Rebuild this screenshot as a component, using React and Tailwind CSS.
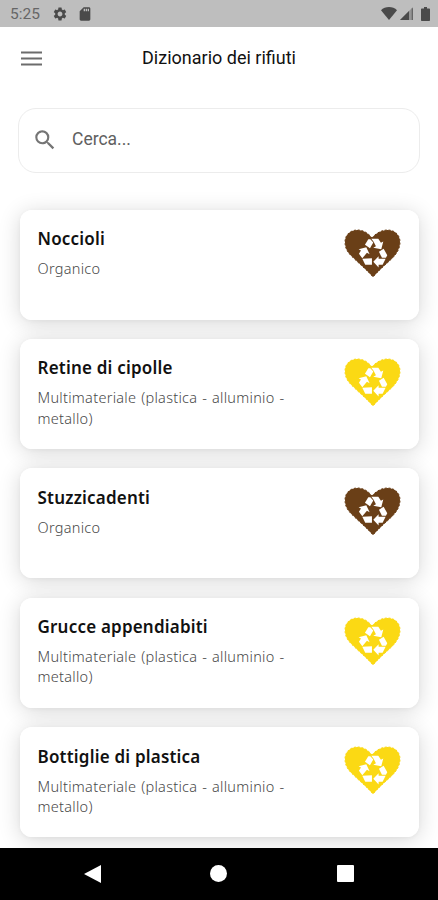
import { MdSdCard, MdSearch, MdSettings } from "react-icons/md";

const items = [
    { name: 'Noccioli', category: 'Organico', color: 'text-[#6a3f17]' },
    { name: 'Retine di cipolle', category: 'Multimateriale (plastica - alluminio - metallo)', color: 'text-[#fbd914]' },
    { name: 'Stuzzicadenti', category: 'Organico', color: 'text-[#6a3f17]' },
    { name: 'Grucce appendiabiti', category: 'Multimateriale (plastica - alluminio - metallo)', color: 'text-[#fbd914]' },
    { name: 'Bottiglie di plastica', category: 'Multimateriale (plastica - alluminio - metallo)', color: 'text-[#fbd914]' },
];

function StatusBar() {
    return (
        <div className="h-[26.5px] shrink-0 bg-[#bebebe] flex items-center pl-[10px] pr-[8.5px] text-[#4a4a4a]">
            <span className="font-[Roboto] text-[15.5px] leading-none text-[#666] mt-[2px]">5:25</span>
            <MdSettings className="size-[16px] ml-[12px] mt-[1px]" />
            <MdSdCard className="size-[16px] ml-[9px] mt-[1px]" />
            <svg className="w-[16px] h-[13px] ml-auto" viewBox="0 0 16 13" fill="currentColor">
                <path d="M8 13 0 3.2C2 1.2 5 0 8 0s6 1.2 8 3.2z" />
            </svg>
            <svg className="w-[13px] h-[13px] ml-[2.5px] mt-[1px]" viewBox="0 0 13 13" fill="currentColor">
                <path d="M13 0v13H0z" opacity=".35" />
                <path d="M9 4v9H0z" />
                <path d="M11.7 1.3H13V13h-1.3z" opacity=".6" />
            </svg>
            <svg className="w-[9px] h-[14px] ml-[8px] mt-[1px]" viewBox="0 0 9 14" fill="currentColor">
                <path d="M3 0h3v1.5h2c.6 0 1 .4 1 1V13c0 .6-.4 1-1 1H1c-.6 0-1-.4-1-1V2.5c0-.6.4-1 1-1h2z" />
            </svg>
        </div>
    )
}

function HeartIcon({ className }) {
    return (
        <svg className={`w-[57px] h-[51px] shrink-0 ${className}`} viewBox="0 0 57 51" fill="currentColor">
            <path
                d="M28 10C31 6 37 2 43.5 2 51 2 56 7 56 14c0 6-2.5 10.500-7 15.500C43 35.500 36 41 29 49 23 42 16 36.500 9 29.500 4 25 1 20.500 1 14 1 7 6 2 13.500 2 20 2 25 6 28 10z"
                stroke="currentColor" strokeWidth="1" strokeDasharray="2 1.8"
            />
            <g fill="#fff" transform="translate(10.300 2.200) scale(.333)">
                <path d="M32 44 42 27h6l9 10-10 17z" />
                <path d="M51 26h21l8 12 7-4-6 23-24-4 8-5-7-13z" />
                <path d="M13 57l23-6 10 21-8-4-14 16-10-13 6-10z" />
                <path d="M24 86l29-2v20H33z" />
                <path d="M74 65l14-9 11 19-4 8H83z" />
                <path d="M57 95l16-17v8h21l-9 18H73v8z" />
            </g>
        </svg>
    )
}

function Card({ item }) {
    return (
        <div className="relative h-[110px] rounded-[12px] bg-white flex justify-between pl-[18px] pr-[18px]">
            <div className="absolute inset-0 -z-10 rounded-[12px] shadow-[0_3px_22px_rgba(0,0,0,0.16),0_1px_4px_rgba(0,0,0,0.04)]" />
            <div className="font-['Noto_Sans',sans-serif]">
                <h2 className="mt-[17.5px] text-[17px] leading-[24px] tracking-[0.2px] font-semibold text-[#111]">{item.name}</h2>
                <p className="mt-[7px] w-[268px] text-[14.5px] leading-[20.3px] tracking-[0.28px] [word-spacing:0.8px] font-light text-[#484848]">{item.category}</p>
            </div>
            <HeartIcon className={`mt-[18px] ${item.color}`} />
        </div>
    )
}

export default function App() {
    return (
        <div className="w-[438px] h-[900px] flex flex-col overflow-hidden bg-white">
            <StatusBar />
            <header className="h-[63.5px] shrink-0 grid grid-cols-[60px_1fr_60px] items-center">
                <svg className="w-[21px] h-[15px] ml-[21px]" viewBox="0 0 21 15" fill="#6c6c6c">
                    <path d="M0 .5h21v2H0zM0 6.5h21v2H0zM0 12.5h21v2H0z" />
                </svg>
                <h1 className="text-center font-[Roboto] text-[18px] leading-6 text-[#111]">Dizionario dei rifiuti</h1>
            </header>
            <div className="mt-[18px] ml-[18px] mr-[18px] h-[65px] shrink-0 rounded-[18px] border border-[#ececec] flex items-center pl-[13px] pb-[2px]">
                <MdSearch className="size-[26px] text-[#757575]" />
                <span className="ml-[14px] font-[Roboto] text-[17.5px] text-[#606060]">Cerca...</span>
            </div>
            <main className="isolate flex-1 min-h-0 mt-[36.5px] px-[19.5px] flex flex-col gap-[19.4px]">
                {items.map((item) => <Card key={item.name} item={item} />)}
            </main>
            <nav className="relative h-[52.5px] shrink-0 bg-black">
                <div className="h-full grid grid-cols-3 items-center justify-items-center px-[29px]">
                    <svg className="w-[17px] h-[18px]" viewBox="0 0 17 18" fill="#fff"><path d="M17 0v18L0 9z" /></svg>
                    <div className="size-[17px] rounded-full bg-white" />
                    <div className="size-[17px] rounded-[1px] bg-white" />
                </div>
            </nav>
        </div>
    )
}
